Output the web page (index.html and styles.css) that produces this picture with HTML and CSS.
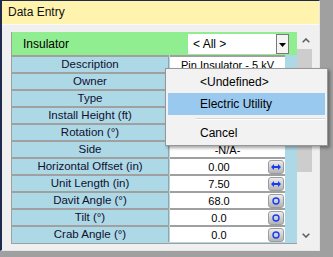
FILE: index.html
```html
<!DOCTYPE html>
<html lang="en">
<head>
    <meta charset="UTF-8">
    <title>Data Entry</title>
    <link rel="stylesheet" href="styles.css">
</head>
<body>
    <div class="window">
        <div class="titlebar">Data Entry</div>

        <div class="body">
            <div class="grid">
                <div class="grid-head">
                    <span class="head-label">Insulator</span>
                    <div class="select">
                        <span class="select-value">&lt; All &gt;</span>
                        <span class="select-btn">
                            <svg width="7" height="4" viewBox="0 0 7 4"><path d="M0 0h7L3.5 4z" fill="#000"/></svg>
                        </span>
                    </div>
                </div>

                <div class="row"><div class="label">Description</div><div class="value"><span class="value-text">Pin Insulator - 5 kV</span></div></div>
                <div class="row"><div class="label">Owner</div><div class="value"></div></div>
                <div class="row"><div class="label">Type</div><div class="value"></div></div>
                <div class="row"><div class="label">Install Height (ft)</div><div class="value"></div></div>
                <div class="row"><div class="label">Rotation (°)</div><div class="value"></div></div>
                <div class="row"><div class="label">Side</div><div class="value"><span class="value-text">-N/A-</span></div></div>
                <div class="row">
                    <div class="label">Horizontal Offset (in)</div>
                    <div class="value">
                        <span class="value-text">0.00</span>
                        <span class="cell-btn"><svg width="10" height="6" viewBox="0 0 10 6"><path d="M0 3l3-3v2h4V0l3 3-3 3V4H3v2z" fill="#1a3cf0"/></svg></span>
                    </div>
                </div>
                <div class="row">
                    <div class="label">Unit Length (in)</div>
                    <div class="value">
                        <span class="value-text">7.50</span>
                        <span class="cell-btn"><svg width="10" height="6" viewBox="0 0 10 6"><path d="M0 3l3-3v2h4V0l3 3-3 3V4H3v2z" fill="#1a3cf0"/></svg></span>
                    </div>
                </div>
                <div class="row">
                    <div class="label">Davit Angle (°)</div>
                    <div class="value">
                        <span class="value-text">68.0</span>
                        <span class="cell-btn"><svg width="8" height="8" viewBox="0 0 8 8"><circle cx="4" cy="4" r="3" fill="none" stroke="#1a3cf0" stroke-width="1.4"/></svg></span>
                    </div>
                </div>
                <div class="row">
                    <div class="label">Tilt (°)</div>
                    <div class="value">
                        <span class="value-text">0.0</span>
                        <span class="cell-btn"><svg width="8" height="8" viewBox="0 0 8 8"><circle cx="4" cy="4" r="3" fill="none" stroke="#1a3cf0" stroke-width="1.4"/></svg></span>
                    </div>
                </div>
                <div class="row">
                    <div class="label">Crab Angle (°)</div>
                    <div class="value">
                        <span class="value-text">0.0</span>
                        <span class="cell-btn"><svg width="8" height="8" viewBox="0 0 8 8"><circle cx="4" cy="4" r="3" fill="none" stroke="#1a3cf0" stroke-width="1.4"/></svg></span>
                    </div>
                </div>
            </div>

            <div class="scrollbar">
                <div class="scroll-arrow">
                    <svg width="8" height="5" viewBox="0 0 8 5"><path d="M0.7 4.3L4 1l3.3 3.3" fill="none" stroke="#606060" stroke-width="1.6"/></svg>
                </div>
                <div class="scroll-track"><div class="scroll-thumb"></div></div>
                <div class="scroll-arrow">
                    <svg width="8" height="5" viewBox="0 0 8 5"><path d="M0.7 0.7L4 4l3.3-3.3" fill="none" stroke="#606060" stroke-width="1.6"/></svg>
                </div>
            </div>
        </div>

        <!-- context menu opened on the Owner cell -->
        <div class="menu">
            <div class="menu-item">&lt;Undefined&gt;</div>
            <div class="menu-item active">Electric Utility</div>
            <div class="menu-sep"></div>
            <div class="menu-item">Cancel</div>
        </div>
    </div>
</body>
</html>
```

FILE: styles.css
```css
* {
    margin: 0;
    padding: 0;
    box-sizing: border-box;
}

body {
    font-family: "Liberation Sans", Arial, sans-serif;
    background: #a0a0a0;
    color: #000;
    width: 333px;
    height: 257px;
    overflow: hidden;
}

.window {
    position: relative;
    width: 320px;
    height: 251px;
    background: #f0f0f0;
    border-top: 1px solid #1f2b4d;
    border-left: 2px solid #1f2b4d;
    border-right: 1px solid #e6e6e6;
    border-bottom: 1px solid #e6e6e6;
}

.titlebar {
    height: 24px;
    background: #fff3ad;
    border-bottom: 1px solid #fafafa;
    font-size: 12px;
    line-height: 22px;
    padding-left: 6px;
    color: #111;
}

.body {
    display: flex;
    padding: 7px 0 0 9px;
}

.grid {
    width: 286px;
    background: #add8e6;
    border-left: 1px solid #a0a0a0;
    border-bottom: 1px solid #a0a0a0;
}

.grid-head {
    height: 23px;
    background: #90ee90;
    display: flex;
    align-items: center;
    font-size: 12px;
}

.head-label {
    padding-left: 11px;
    flex: 1;
}

.select {
    display: flex;
    height: 20px;
    margin-right: 8px;
    margin-top: 1px;
}

.select-value {
    width: 88px;
    background: #fff;
    font-size: 12px;
    line-height: 20px;
    padding-left: 5px;
}

.select-btn {
    width: 13px;
    background: #f4f4f4;
    border: 1px solid #7a7a7a;
    display: flex;
    align-items: center;
    justify-content: center;
    padding-top: 2px;
}

.row {
    display: flex;
    height: 17px;
    font-size: 11.5px;
}

.label {
    width: 157px;
    border-top: 2px solid #a0a0a0;
    border-right: 1px solid #a0a0a0;
    text-align: center;
    line-height: 15px;
    color: #101030;
}

.value {
    width: 115px;
    margin-left: 1px;
    background: #fff;
    border-top: 2px solid #a0a0a0;
    display: flex;
    align-items: center;
    font-size: 11px;
}

.value-text {
    flex: 1;
    text-align: center;
}

.cell-btn {
    width: 16px;
    height: 14px;
    margin-right: 1px;
    border-radius: 3px;
    background: linear-gradient(#ececec, #b4b4b4);
    border: 1px solid #9c9c9c;
    display: flex;
    align-items: center;
    justify-content: center;
}

.scrollbar {
    width: 16px;
    height: 212px;
    display: flex;
    flex-direction: column;
}

.scroll-arrow {
    height: 17px;
    display: flex;
    align-items: center;
    justify-content: center;
    padding-left: 1px;
}

.scroll-track {
    flex: 1;
}

.scroll-thumb {
    width: 15px;
    height: 123px;
    background: #cdcdcd;
}

.menu {
    position: absolute;
    left: 163px;
    top: 67px;
    width: 163px;
    height: 78px;
    background: #f2f2f2;
    border: 1px solid #979797;
    box-shadow: 2px 2px 3px rgba(0, 0, 0, 0.35);
    padding: 2px;
    font-size: 12px;
}

.menu-item {
    height: 22px;
    line-height: 22px;
    padding-left: 32px;
}

.menu-item.active {
    background: #99c9ef;
}

.menu-sep {
    height: 2px;
    margin: 3px 0 2px 28px;
    border-top: 1px solid #d7d7d7;
    border-bottom: 1px solid #fff;
}
```
